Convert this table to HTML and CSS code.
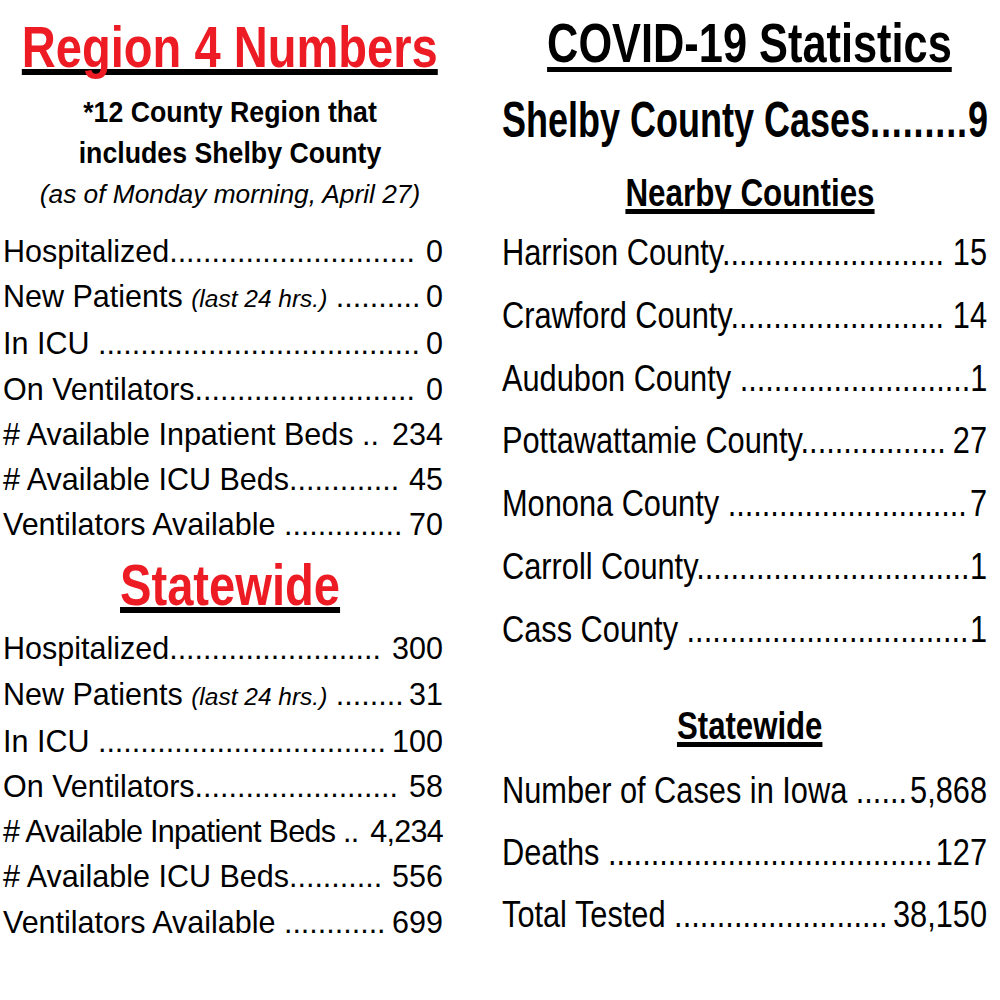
FILE: index.html
```html
<!DOCTYPE html>
<html lang="en">
<head>
<meta charset="utf-8">
<title>COVID-19 Statistics</title>
<link rel="stylesheet" href="styles.css">
</head>
<body>
<div class="page">
  <section class="col left">
    <h1 class="head red first"><span class="hs">Region 4 Numbers</span></h1>
    <p class="sub"><span class="ss">*12 County Region that</span></p>
    <p class="sub"><span class="ss">includes Shelby County</span></p>
    <p class="asof">(as of Monday morning, April 27)</p>
    <div class="rows lrows">
      <div class="row"><span class="lbl">Hospitalized<span class="dots">.............................</span></span><span class="val">&nbsp;0</span></div>
      <div class="row"><span class="lbl">New Patients <i class="note">(last 24 hrs.)</i> <span class="dots">..........</span></span><span class="val">0</span></div>
      <div class="row"><span class="lbl">In ICU <span class="dots">......................................</span></span><span class="val">0</span></div>
      <div class="row"><span class="lbl">On Ventilators<span class="dots">..........................</span></span><span class="val">&nbsp;0</span></div>
      <div class="row"><span class="lbl"># Available Inpatient Beds <span class="dots">..</span></span><span class="val">&nbsp;234</span></div>
      <div class="row"><span class="lbl"># Available ICU Beds<span class="dots">.............</span></span><span class="val">45</span></div>
      <div class="row"><span class="lbl">Ventilators Available <span class="dots">..............</span></span><span class="val">70</span></div>
    </div>
    <h2 class="head red second"><span class="hs2">Statewide</span></h2>
    <div class="rows lrows lrows2">
      <div class="row"><span class="lbl">Hospitalized<span class="dots">.........................</span></span><span class="val">&nbsp;300</span></div>
      <div class="row"><span class="lbl">New Patients <i class="note">(last 24 hrs.)</i> <span class="dots">........</span></span><span class="val">31</span></div>
      <div class="row"><span class="lbl">In ICU <span class="dots">..................................</span></span><span class="val">100</span></div>
      <div class="row"><span class="lbl">On Ventilators<span class="dots">........................</span></span><span class="val">&nbsp;58</span></div>
      <div class="row tight"><span class="lbl"># Available Inpatient Beds <span class="dots">..</span></span><span class="val">&nbsp;4,234</span></div>
      <div class="row"><span class="lbl"># Available ICU Beds<span class="dots">...........</span></span><span class="val">556</span></div>
      <div class="row"><span class="lbl">Ventilators Available <span class="dots">............</span></span><span class="val">699</span></div>
    </div>
  </section>
  <section class="col right">
    <h1 class="head covid"><span class="cs">COVID-19 Statistics</span></h1>
    <div class="shelby-wrap">
      <div class="row shelby"><span class="lbl">Shelby County Cases<span class="dots">.........</span></span><span class="val">9</span></div>
    </div>
    <h2 class="head small nearby"><span class="ns">Nearby Counties</span></h2>
    <div class="rows rrows">
      <div class="row"><span class="lbl">Harrison County<span class="dots">..........................</span></span><span class="val">15</span></div>
      <div class="row"><span class="lbl">Crawford County<span class="dots">.........................</span></span><span class="val">14</span></div>
      <div class="row"><span class="lbl">Audubon County <span class="dots">...........................</span></span><span class="val">1</span></div>
      <div class="row"><span class="lbl">Pottawattamie County<span class="dots">.................</span></span><span class="val">27</span></div>
      <div class="row"><span class="lbl">Monona County <span class="dots">............................</span></span><span class="val">7</span></div>
      <div class="row"><span class="lbl">Carroll County<span class="dots">................................</span></span><span class="val">1</span></div>
      <div class="row"><span class="lbl">Cass County <span class="dots">.................................</span></span><span class="val">1</span></div>
    </div>
    <h2 class="head small state"><span class="ns2">Statewide</span></h2>
    <div class="rows rrows rrows2">
      <div class="row"><span class="lbl">Number of Cases in Iowa <span class="dots">......</span></span><span class="val">5,868</span></div>
      <div class="row"><span class="lbl">Deaths <span class="dots">......................................</span></span><span class="val">127</span></div>
      <div class="row"><span class="lbl">Total Tested <span class="dots">.........................</span></span><span class="val">38,150</span></div>
    </div>
  </section>
</div>
</body>
</html>
```

FILE: styles.css
```css
html, body {
  margin: 0;
  padding: 0;
  background: #ffffff;
  overflow: hidden;
}

body {
  color: #000000;
  font-family: "Liberation Sans", Arial, sans-serif;
}

.page {
  display: grid;
  grid-template-columns: 460px 495px;
  column-gap: 42px;
  width: 1000px;
  height: 1000px;
}

.col {
  display: flex;
  flex-direction: column;
  min-width: 0;
}

h1, h2, p {
  margin: 0;
  font-weight: normal;
}

/* ---------- headings (condensed by horizontal scale) ---------- */

.head {
  display: flex;
  justify-content: center;
  font-weight: bold;
  white-space: nowrap;
}

.head span {
  display: block;
  flex: none;
  text-decoration-line: underline;
  text-decoration-color: #000000;
  text-decoration-skip-ink: none;
}

.red {
  color: #ed1c24;
  font-size: 57px;
  line-height: 70px;
}

.red span {
  text-decoration-thickness: 6px;
  text-underline-offset: 2px;
}

.hs {
  transform: scaleX(0.826);
}

.hs2 {
  transform: scaleX(0.827);
}

.first {
  margin-top: 12px;
}

.second {
  margin-top: 3px;
}

/* ---------- left column ---------- */

.sub {
  display: flex;
  justify-content: center;
  white-space: nowrap;
  font-weight: bold;
  font-size: 30px;
  line-height: 41px;
}

.ss {
  display: block;
  flex: none;
  transform: scaleX(0.89);
}

.first + .sub {
  margin-top: 9px;
}

.asof {
  font-style: italic;
  font-size: 26.3px;
  line-height: 40px;
  text-align: center;
  margin-top: 1px;
  white-space: nowrap;
}

.rows {
  display: flex;
  flex-direction: column;
}

.row {
  display: flex;
  justify-content: space-between;
  align-items: baseline;
  white-space: nowrap;
}

.lbl, .val {
  flex: none;
  white-space: pre;
}

.lrows {
  padding: 0 17px 0 3px;
  font-size: 30.5px;
  line-height: 45.2px;
  margin-top: 15px;
}

.lrows2 {
  margin-top: 6px;
}

.tight {
  letter-spacing: -0.7px;
}

.note {
  font-style: italic;
  font-size: 24.5px;
  letter-spacing: 0;
}

/* ---------- right column ---------- */

.covid {
  font-size: 56px;
  line-height: 66px;
  margin-top: 10px;
}

.cs {
  transform: scaleX(0.774);
  text-decoration-thickness: 5px;
  text-underline-offset: 5px;
}

.shelby-wrap {
  margin-top: 14px;
  padding-right: 9px;
}

.shelby {
  width: calc(100% / 0.72);
  transform: scaleX(0.72);
  transform-origin: left center;
  font-weight: bold;
  font-size: 50px;
  line-height: 60px;
}

.shelby .dots {
  letter-spacing: 1.2px;
}

.small {
  font-size: 38px;
  line-height: 50px;
}

.small span {
  text-decoration-thickness: 4.5px;
  text-underline-offset: 3px;
}

.ns {
  transform: scaleX(0.825);
}

.ns2 {
  transform: scaleX(0.82);
}

.nearby {
  margin-top: 18px;
}

.state {
  margin-top: 40px;
}

.rrows {
  padding-right: 10px;
  font-size: 37.5px;
  line-height: 62.8px;
  margin-top: 3px;
}

.rrows .row {
  width: calc(100% / 0.82);
  transform: scaleX(0.82);
  transform-origin: left center;
}

.rrows2 {
  line-height: 62px;
  margin-top: 8px;
}
```
